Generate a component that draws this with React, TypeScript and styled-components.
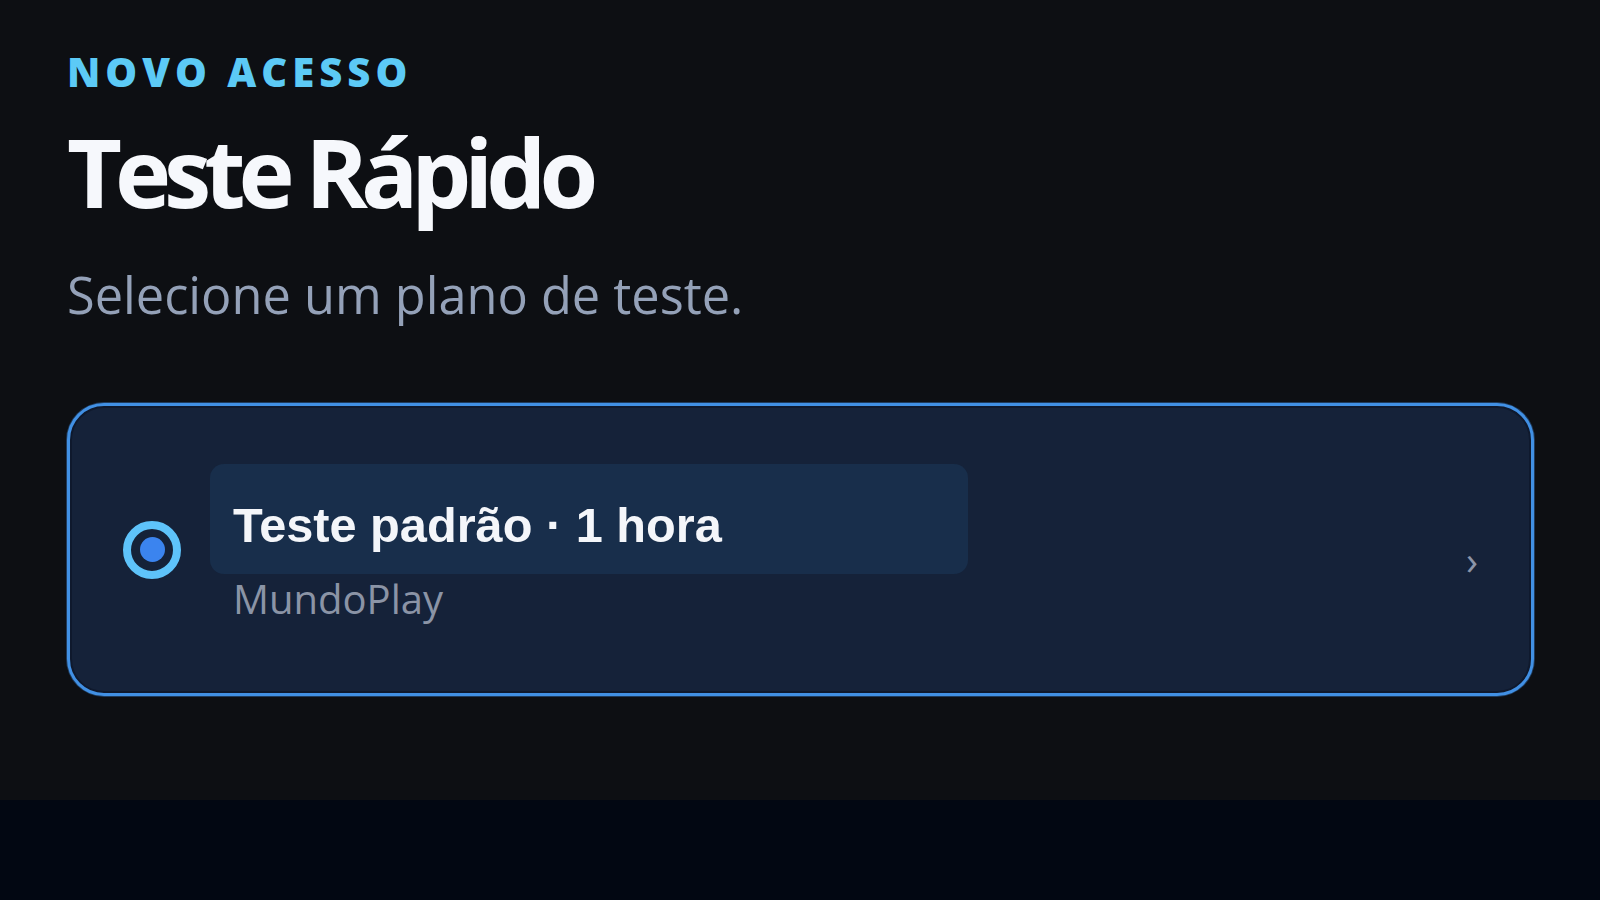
import React from "react";
import styled, { createGlobalStyle } from "styled-components";

const GlobalStyle = createGlobalStyle`
  html, body {
    margin: 0;
    padding: 0;
    background: #020712;
  }
  body {
    font-family: "Open Sans", "Noto Sans", sans-serif;
    -webkit-font-smoothing: antialiased;
  }
  * { box-sizing: border-box; }
`;

const Screen = styled.main`
  min-height: 800px;
  background: #0d0f13;
  padding: 52px 66px 0 67px;
  display: flex;
  flex-direction: column;
`;

const Eyebrow = styled.div`
  font-family: "Open Sans", sans-serif;
  font-weight: 800;
  font-size: 40px;
  line-height: 40px;
  letter-spacing: 0.125em;
  color: #5ccaf6;
  text-transform: uppercase;
`;

const Title = styled.h1`
  margin: 32px 0 0;
  font-family: "Open Sans", sans-serif;
  font-weight: 700;
  font-size: 95px;
  line-height: 95px;
  letter-spacing: -0.074em;
  color: #f6f8fc;
`;

const Subtitle = styled.p`
  margin: 51px 0 0;
  font-family: "Open Sans", sans-serif;
  font-weight: 400;
  font-size: 50.5px;
  line-height: 50px;
  color: #94a1b8;
`;

const PlanCard = styled.div`
  margin-top: 83px;
  height: 293px;
  display: flex;
  align-items: center;
  padding: 0 53px;
  background: #152239;
  border: 3px solid #4190e4;
  border-radius: 37px;
  box-shadow: 0 0 0 1px rgba(65, 144, 228, 0.35),
    inset 0 0 0 2px rgba(8, 16, 32, 0.45);
`;

const Radio = styled.span`
  flex: 0 0 auto;
  width: 58px;
  height: 58px;
  border-radius: 50%;
  border: 8px solid #5ec3fa;
  display: flex;
  align-items: center;
  justify-content: center;
  &::after {
    content: "";
    width: 25px;
    height: 25px;
    border-radius: 50%;
    background: #3b84ef;
  }
`;

const PlanText = styled.div`
  align-self: flex-start;
  margin: 58px 0 0 29px;
  display: flex;
  flex-direction: column;
`;

const PlanName = styled.div<{ $width: number }>`
  width: ${(p) => p.$width}px;
  height: 110px;
  padding: 33px 23px 0;
  background: #182e4b;
  border-radius: 14px;
  font-family: "Liberation Sans", Arial, sans-serif;
  font-weight: 700;
  font-size: 48.7px;
  line-height: 56px;
  color: #f4f6fa;
  white-space: nowrap;
`;

const Provider = styled.div`
  margin: 1px 0 0 23px;
  font-family: "Open Sans", sans-serif;
  font-size: 40px;
  line-height: 48px;
  color: #8b94a6;
`;

const Chevron = styled.span`
  margin-left: auto;
  padding-top: 20px;
  font-family: "Open Sans", sans-serif;
  font-size: 40px;
  line-height: 40px;
  color: #8c95a8;
`;

export default function App() {
  return (
    <>
      <GlobalStyle />
      <Screen>
        <Eyebrow>Novo acesso</Eyebrow>
        <Title>Teste Rápido</Title>
        <Subtitle>Selecione um plano de teste.</Subtitle>
        <PlanCard role="radio" aria-checked="true">
          <Radio />
          <PlanText>
            <PlanName $width={758}>Teste padrão · 1 hora</PlanName>
            <Provider>MundoPlay</Provider>
          </PlanText>
          <Chevron>›</Chevron>
        </PlanCard>
      </Screen>
    </>
  );
}
